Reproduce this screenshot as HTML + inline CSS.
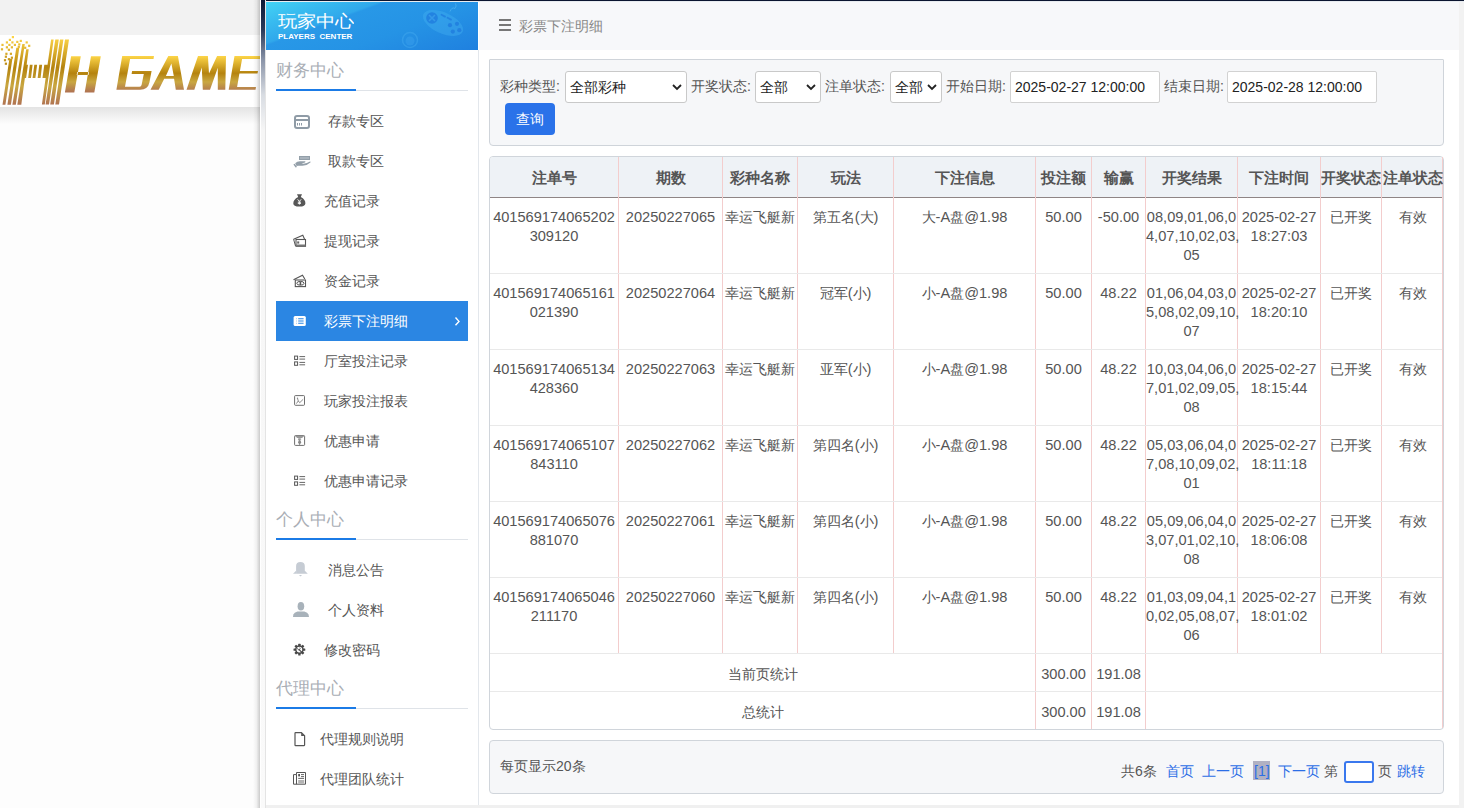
<!DOCTYPE html>
<html><head><meta charset="utf-8">
<style>
*{box-sizing:border-box;margin:0;padding:0}
html,body{width:1464px;height:808px;overflow:hidden;background:#fdfdfd;font-family:"Liberation Sans",sans-serif;font-size:14px;color:#555}
.abs{position:absolute}
/* left background */
#lb-top{left:0;top:0;width:260px;height:35px;background:#f2f2f2}
#lb-band{left:0;top:35px;width:260px;height:72px;background:#fff}
#lb-shadow{left:0;top:107px;width:260px;height:17px;background:linear-gradient(#e3e3e3,#fdfdfd)}
#lb-rshadow{left:253px;top:0;width:7px;height:808px;background:linear-gradient(90deg,rgba(0,0,0,0),rgba(0,0,0,.05) 50%,rgba(0,0,0,.2))}
#lb-white{left:260px;top:0;width:1px;height:808px;background:#fff}
/* panel */
#panel{left:261px;top:0;width:1203px;height:808px;background:#fff}
#topline{left:261px;top:0;width:1203px;height:2px;background:linear-gradient(#0b1530 0,#0b1530 50%,#e8ecf0 50%)}
#lbar{left:261px;top:0;width:4px;height:808px;background:linear-gradient(#0a1836 0,#2a3a5a 30px,#8a94a8 60px,#d8dce2 95px,#f6f6f6 130px,#fafafa 100%)}
#lbar2{left:265px;top:0;width:1px;height:808px;background:#e4e4e4}
#side{left:266px;top:2px;width:212px;height:803px;background:#fff}
#head{left:266px;top:2px;width:212px;height:48px;background:linear-gradient(160deg,#43d3f5 0%,#39bdf0 16%,#30a8eb 33%,#2898e7 35%,#2593e5 62%,#1f80df 100%);overflow:hidden}
#divider{left:478px;top:50px;width:1px;height:755px;background:#e3e7ec}
#crumb{left:479px;top:2px;width:980px;height:48px;background:#f7f8fa}
#rband{left:1459px;top:2px;width:5px;height:806px;background:#f2f2f2}
#bband{left:261px;top:805px;width:1198px;height:3px;background:#f0f0f0}

.sec{position:absolute;left:276px;font-size:17px;color:#a9aeb5;line-height:20px}
.secline{position:absolute;left:276px;width:192px;height:1px;background:#dfe3e8}
.secblue{position:absolute;left:276px;width:80px;height:2px;background:#1b7be6}
.mi{position:absolute;font-size:14px;color:#555;line-height:16px;white-space:nowrap}
.ic{position:absolute}
#active{left:276px;top:301px;width:192px;height:40px;background:#2b86e3}

/* filter */
#filter{left:489px;top:59px;width:955px;height:87px;background:#f6f7f9;border:1px solid #cfd4da;border-radius:1px 1px 4px 4px}
.lbl{position:absolute;top:78px;font-size:14px;color:#555;line-height:16px;white-space:nowrap}
.sel{position:absolute;top:71px;height:32px;background:#fff;border:1px solid #c9c9c9;border-radius:3px;font-size:14px;color:#222;line-height:16px;padding:7px 0 0 4px;white-space:nowrap}
.sel svg{position:absolute;top:12px}
.inp{position:absolute;top:71px;height:32px;width:150px;background:#fff;border:1px solid #d2d2d2;border-radius:2px;font-size:14px;color:#222;padding:7px 0 0 4px;line-height:16px;white-space:nowrap}
#btn{left:505px;top:103px;width:50px;height:32px;background:#2a72e9;border-radius:4px;color:#fff;font-size:14px;line-height:16px;padding:8px 0 0 0;text-align:center}

/* table */
#tbl{left:489px;top:156px;width:955px;height:574px;border:1px solid #d0d5db;border-radius:4px;background:#fff}
.vl{width:1px;background:#f3cdcd}
.hl{left:490px;width:952px;height:1px;background:#e9e9e9}
.th{position:absolute;top:170px;font-size:15px;font-weight:bold;color:#555;text-align:center;line-height:16px;white-space:nowrap;overflow:hidden}
.td{position:absolute;font-size:14px;color:#555;text-align:center;line-height:19px;white-space:nowrap}
.n{font-size:14.6px}
/* pager */
#pager{left:489px;top:740px;width:955px;height:54px;background:#f6f7f9;border:1px solid #d0d5db;border-radius:4px}
.pg{position:absolute;top:763px;font-size:14px;line-height:16px;white-space:nowrap;color:#555}
.pb{color:#2c6ee6}
</style></head><body>
<div class="abs" id="lb-top"></div>
<div class="abs" id="lb-band"></div>
<div class="abs" id="lb-shadow"></div>
<svg class="abs" style="left:0;top:0" width="260" height="110" viewBox="0 0 260 110">
<defs>
<linearGradient id="gl" gradientUnits="userSpaceOnUse" x1="0" y1="56" x2="0" y2="92"><stop offset="0" stop-color="#fdd547"/><stop offset=".48" stop-color="#b5830e"/><stop offset=".72" stop-color="#c9a741"/><stop offset="1" stop-color="#b07352"/></linearGradient>
<linearGradient id="gs" gradientUnits="userSpaceOnUse" x1="0" y1="37" x2="0" y2="105"><stop offset="0" stop-color="#fdd547"/><stop offset=".45" stop-color="#b5830e"/><stop offset=".72" stop-color="#c9a741"/><stop offset="1" stop-color="#b07352"/></linearGradient>
</defs>
<g fill="url(#gs)"><path d="M51.1,39.6L53.6,39.6L44.8,104.6L41.9,104.6ZM55.3,39.6L58.8,39.6L49,104.6L45.6,104.6ZM60,39.6L63.4,39.6L53.9,104.6L50.2,104.6ZM65,39.6L69,39.6L59,104.6L55.3,104.6ZM9.4,58.7L12.4,58.7L5.4,104.7L2.5,104.7ZM16.3,47.8L19.3,47.8L10.9,104.7L7.4,104.7ZM22.3,43.9L24.8,43.9L15.8,104.7L12.4,104.7ZM26.2,49.3L28.7,49.3L21.3,104.7L17.3,104.7ZM24.0,64.65L28,64.65L26.1,78L21.8,78ZM29.85,64.65L32.6,64.65L31,78L28.2,78ZM34.3,64.65L37.1,64.65L35.4,78L32.6,78ZM39.3,64.65L42.1,64.65L40.6,78L37.65,78ZM44.3,64.65L48.6,64.65L47,78L42.5,78Z"/><rect x="11.8" y="36.0" width="2.2" height="2.2"/><rect x="8.8" y="38.8" width="2.2" height="2.2"/><rect x="5.8" y="41.3" width="2.2" height="2.2"/><rect x="11.3" y="41.3" width="2.2" height="2.2"/><rect x="16.2" y="40.8" width="2.2" height="2.2"/><rect x="19.7" y="39.8" width="2.2" height="2.2"/><rect x="25.6" y="41.3" width="2.2" height="2.2"/><rect x="1.4" y="43.8" width="2.2" height="2.2"/><rect x="8.3" y="43.8" width="2.2" height="2.2"/><rect x="13.8" y="43.8" width="2.2" height="2.2"/><rect x="18.2" y="43.3" width="2.2" height="2.2"/><rect x="28.1" y="44.7" width="2.2" height="2.2"/><rect x="5.8" y="46.2" width="2.2" height="2.2"/><rect x="10.8" y="46.2" width="2.2" height="2.2"/><rect x="17.7" y="45.7" width="2.2" height="2.2"/><rect x="24.1" y="46.7" width="2.2" height="2.2"/><rect x="0.9" y="48.2" width="2.2" height="2.2"/><rect x="7.8" y="48.7" width="2.2" height="2.2"/><rect x="5.3" y="52.7" width="2.2" height="2.2"/><rect x="9.8" y="52.7" width="2.2" height="2.2"/><rect x="4.8" y="55.6" width="2.2" height="2.2"/><rect x="10.8" y="56.6" width="2.2" height="2.2"/><rect x="7.8" y="58.1" width="2.2" height="2.2"/><rect x="3.9" y="59.1" width="2.2" height="2.2"/><rect x="4.8" y="62.6" width="2.2" height="2.2"/></g>
<path fill="url(#gl)" fill-rule="evenodd" d="M71.1,56.2L80.8,56.2L74.3,92.5L64.9,92.5ZM91,56.2L100.8,56.2L94.3,92.5L84.7,92.5ZM77.2,72.1L89,72.1L88.5,74.9L76.7,74.9ZM122.2,55.9L154,55.9L153.5,59L130.1,59L125,86.8L139.5,86.8Q141.3,86.8 141.7,84.6L143.8,74L131.6,74L132.1,71L151.6,71L149.4,82.6Q148,89.7 140,89.7L116.4,89.7ZM150.5,89.7L168.3,55.9L177.9,55.9L184,89.7L175.8,89.7L174.1,78.8L164.2,78.8L158.7,89.7ZM165.9,76.1L173.8,76.1L171.4,63.4ZM186.5,89.7L198,55.9L207.9,55.9L209,73.5L217.1,55.9L226,55.9L225.3,89.7L217.8,89.7L217.8,67.8L210,89.7L202.8,89.7L201.8,67.5L194.3,89.7ZM234.5,55.9L262,55.9L261.5,59L242.1,59L239.9,71L258,71L257.5,73.6L239.4,73.6L237.1,86.9L256,86.9L255.5,89.7L228.7,89.7Z"/>
</svg>
<div class="abs" id="lb-rshadow"></div>
<div class="abs" id="lb-white"></div>

<div class="abs" id="panel"></div>
<div class="abs" id="side"></div>
<div class="abs" id="head">
<svg class="abs" style="left:0;top:0" width="212" height="48" viewBox="0 0 212 48">
<g transform="rotate(24 177 21)"><ellipse cx="177" cy="21" rx="21.5" ry="10.5" fill="#48b4f3" opacity=".38"/></g>
<circle cx="166" cy="16" r="5.8" fill="#1d7ade" opacity=".75"/>
<path d="M163 13l6 6M169 13l-6 6" stroke="#3a9fec" stroke-width="1.6" opacity=".8"/>
<path d="M175.5 12.8l3.5 1.8M181.5 15.8l3.5 1.8" stroke="#1d7ade" stroke-width="1.8" stroke-linecap="round" opacity=".7"/>
<circle cx="184" cy="23.2" r="2.1" fill="#1d7ade" opacity=".75"/><circle cx="191" cy="21.8" r="2.1" fill="#1d7ade" opacity=".75"/>
<circle cx="186.8" cy="29.6" r="2.1" fill="#1d7ade" opacity=".75"/><circle cx="193.3" cy="28.2" r="2.1" fill="#1d7ade" opacity=".75"/>
<path d="M184 9.5 Q186 4.5 189 6.5 Q191 4 189.5 1.5" fill="none" stroke="#55b8f2" stroke-width="1" opacity=".6"/>
<circle cx="144" cy="38" r="7.5" fill="none" stroke="#45aaf0" stroke-width="1.5" opacity=".45"/>
<circle cx="144" cy="39" r="4.5" fill="#45aaf0" opacity=".35"/>
</svg>
<div class="abs" style="left:12px;top:9px;font-size:19px;line-height:22px;color:#fff;white-space:nowrap;transform:scaleY(.88);transform-origin:0 50%">玩家中心</div>
<div class="abs" style="left:12px;top:30px;font-size:8px;line-height:10px;font-weight:bold;color:#fff;white-space:nowrap">PLAYERS</div>
<div class="abs" style="left:53.5px;top:30px;font-size:8px;line-height:10px;font-weight:bold;color:#fff;white-space:nowrap">CENTER</div>
</div>
<div class="abs" id="crumb"></div>
<div class="abs" id="divider"></div>
<div class="abs" id="rband"></div>
<div class="abs" id="bband"></div>
<div class="abs" id="topline"></div>
<div class="abs" id="lbar"></div>
<div class="abs" id="lbar2"></div>

<!-- sidebar -->
<div class="sec" style="top:61px">财务中心</div>
<div class="secline" style="top:90px"></div>
<div class="secblue" style="top:89px"></div>
<div id="active" class="abs"></div>
<div class="mi" style="left:328px;top:113px">存款专区</div>
<div class="mi" style="left:328px;top:153px">取款专区</div>
<div class="mi" style="left:324px;top:193px">充值记录</div>
<div class="mi" style="left:324px;top:233px">提现记录</div>
<div class="mi" style="left:324px;top:273px">资金记录</div>
<div class="mi" style="left:324px;top:313px;color:#fff">彩票下注明细</div>
<div class="mi" style="left:324px;top:353px">厅室投注记录</div>
<div class="mi" style="left:324px;top:393px">玩家投注报表</div>
<div class="mi" style="left:324px;top:433px">优惠申请</div>
<div class="mi" style="left:324px;top:473px">优惠申请记录</div>

<div class="sec" style="top:510px">个人中心</div>
<div class="secline" style="top:539px"></div>
<div class="secblue" style="top:538px"></div>
<div class="mi" style="left:328px;top:562px">消息公告</div>
<div class="mi" style="left:328px;top:602px">个人资料</div>
<div class="mi" style="left:324px;top:642px">修改密码</div>

<div class="sec" style="top:679px">代理中心</div>
<div class="secline" style="top:708px"></div>
<div class="secblue" style="top:707px"></div>
<div class="mi" style="left:320px;top:731px">代理规则说明</div>
<div class="mi" style="left:320px;top:771px">代理团队统计</div>

<svg class="abs" style="left:286px;top:100px" width="180" height="700" viewBox="286 100 180 700">
<!-- card -->
<rect x="295" y="116" width="14" height="12" rx="2" fill="none" stroke="#8f9ba6" stroke-width="2"/>
<rect x="295" y="119" width="14" height="2" fill="#8f9ba6"/>
<path d="M297.5 123v2.5M299.5 123v2.5M301.5 123v2.5" stroke="#8f9ba6" stroke-width="1"/>
<!-- hand -->
<rect x="299" y="156" width="11" height="4" fill="#a9b3bc"/>
<rect x="299.5" y="156.5" width="10" height="3" fill="none" stroke="#939fa9" stroke-width="1"/>
<path d="M295.2 163.2Q297 161.3 300 161.3L305 161.3Q306 161.6 305 162.6L301.5 163.4L303.5 163.7Q307 163.4 310 161.4Q311 161.4 310.4 162.4Q307 165.6 302.5 165.8L298.2 165.8L296.6 166Z" fill="#939fa9"/>
<path d="M293.4 164.4L294.8 163.8L297 167L295.6 167.6Z" fill="#939fa9"/>
<!-- money bag -->
<path d="M297 194.3L302 194.3L300.8 197Q305.6 199.5 305.4 203.5Q305.3 206.6 299.5 206.6Q293.2 206.6 293.3 203.5Q293.2 199.5 298.2 197Z" fill="#575757"/>
<path d="M297.6 199.3L299.4 201.4L301.2 199.3M299.4 201.4V204.6M297.8 202.2H301M297.8 203.4H301" fill="none" stroke="#fff" stroke-width=".9"/>
<!-- wallet -->
<path d="M293.6 239.2L302.8 235.3L304.6 239.2" fill="none" stroke="#555" stroke-width="1.1"/>
<path d="M293.6 239.2L295.5 246" fill="none" stroke="#555" stroke-width="1"/>
<rect x="296" y="239.5" width="9.5" height="6.8" fill="none" stroke="#555" stroke-width="1.1"/>
<rect x="297.2" y="241.4" width="2" height="2.2" fill="#666"/>
<rect x="296" y="244.5" width="9.5" height="1.8" fill="#777"/>
<!-- cash -->
<path d="M293.5 279.7L302.5 275.2L304.8 279" fill="none" stroke="#555" stroke-width="1.1"/>
<rect x="295.3" y="280" width="10.2" height="6.6" fill="none" stroke="#555" stroke-width="1.1"/>
<ellipse cx="300.4" cy="283.3" rx="3.6" ry="1.9" fill="none" stroke="#555" stroke-width="1"/>
<rect x="299.6" y="281.6" width="1.6" height="3.4" fill="#555"/>
<!-- active list (white) -->
<rect x="293.6" y="316" width="12.2" height="10" rx="1.5" fill="#fff"/>
<path d="M298.2 318.7H303.6M298.2 321H303.6M298.2 323.3H303.6" stroke="#2b86e3" stroke-width="1.1"/>
<path d="M296.2 318.7H296.9M296.2 321H296.9M296.2 323.3H296.9" stroke="#2b86e3" stroke-width="1" opacity=".6"/>
<path d="M455.5 317.5L459 321.4L455.5 325.3" fill="none" stroke="#fff" stroke-width="1.4"/>
<!-- list 1 -->
<rect x="294.6" y="356.1" width="3" height="3.3" fill="none" stroke="#555" stroke-width="1"/>
<rect x="294.6" y="361.9" width="3" height="3.4" fill="none" stroke="#555" stroke-width="1"/>
<path d="M299.4 356.6H305.1M299.4 359.1H305.1M299.4 362.4H305.1M299.4 364.8H305.1" stroke="#666" stroke-width="1"/>
<!-- chart -->
<rect x="294.6" y="395.6" width="9.9" height="9.7" rx=".8" fill="none" stroke="#666" stroke-width=".95"/>
<path d="M296.4 403.6L298.3 400.9L299.7 402.7L303.2 399.3M297.5 398.4L298.3 400.9" fill="none" stroke="#777" stroke-width=".85"/>
<circle cx="297.5" cy="398.2" r=".7" fill="#888"/>
<!-- gift -->
<rect x="294.6" y="435.6" width="10" height="9.8" rx=".8" fill="none" stroke="#666" stroke-width=".95"/>
<path d="M294.6 435.8H304.6L302 438H297.2Z" fill="#999"/>
<path d="M299.6 438.6V445" stroke="#888" stroke-width=".9"/><rect x="298.4" y="438.8" width="2.4" height="1.2" fill="none" stroke="#888" stroke-width=".6"/>
<ellipse cx="299.6" cy="442.3" rx="1.5" ry="1.8" fill="#888"/>
<!-- list 2 -->
<rect x="294.6" y="476.1" width="3" height="3.3" fill="none" stroke="#555" stroke-width="1"/>
<rect x="294.6" y="481.9" width="3" height="3.4" fill="none" stroke="#555" stroke-width="1"/>
<path d="M299.4 476.6H305.1M299.4 479.1H305.1M299.4 482.4H305.1M299.4 484.8H305.1" stroke="#666" stroke-width="1"/>
<!-- bell -->
<path d="M296.1 573.8V566Q296.1 562.1 300.4 562.1Q304.8 562.1 304.8 566V570.8L307.8 573.8Z" fill="#c6ccd4"/>
<path d="M293 573.8L296.1 570.8L296.1 573.8Z" fill="#c6ccd4"/>
<path d="M299 575.1H302L300.5 576.6Z" fill="#c6ccd4"/>
<!-- person -->
<ellipse cx="300.9" cy="606.3" rx="3.3" ry="4.3" fill="#a8b2ba"/>
<path d="M293 617L293.4 614.6Q294 612.6 297.5 611.6L304.3 611.6Q307.8 612.6 308.5 614.6L309 617Z" fill="#a8b2ba"/>
<!-- gear -->
<g transform="translate(299.4 649.6)" fill="#484848">
<rect x="-1.2" y="-5.9" width="2.4" height="2.6" rx=".5"/>
<rect x="-1.2" y="-5.9" width="2.4" height="2.6" rx=".5" transform="rotate(45)"/>
<rect x="-1.2" y="-5.9" width="2.4" height="2.6" rx=".5" transform="rotate(90)"/>
<rect x="-1.2" y="-5.9" width="2.4" height="2.6" rx=".5" transform="rotate(135)"/>
<rect x="-1.2" y="-5.9" width="2.4" height="2.6" rx=".5" transform="rotate(180)"/>
<rect x="-1.2" y="-5.9" width="2.4" height="2.6" rx=".5" transform="rotate(225)"/>
<rect x="-1.2" y="-5.9" width="2.4" height="2.6" rx=".5" transform="rotate(270)"/>
<rect x="-1.2" y="-5.9" width="2.4" height="2.6" rx=".5" transform="rotate(315)"/>
<circle r="3.6" fill="none" stroke="#484848" stroke-width="1.4"/>
<path d="M-.6 -.2L2.6 2.8" stroke="#484848" stroke-width="1.2"/>
<path d="M-1.8 -1.4A1.3 1.3 0 1 0 .4 -2" fill="none" stroke="#484848" stroke-width=".9"/>
</g>
<!-- doc -->
<path d="M295.6 732.6H301.4L304.6 735.8V745.1Q304.6 745.6 304.1 745.6H295.6Q295 745.6 295 745V733.2Q295 732.6 295.6 732.6Z" fill="none" stroke="#555" stroke-width="1.2"/>
<path d="M301.2 732.6L304.6 736L301.2 736Z" fill="#555"/>
<!-- newspaper -->
<path d="M296.5 772.5H305.5V784.2H293.5V774.6H296.5Z" fill="none" stroke="#555" stroke-width="1"/>
<path d="M296.5 774.6V784.2" stroke="#555" stroke-width="1"/>
<rect x="298.2" y="774" width="1.8" height="2.4" fill="#555"/>
<path d="M301 774.6H304M301 776.6H304M298.2 778.4H304" stroke="#555" stroke-width=".9"/>
<rect x="298.2" y="780" width="6" height="3.6" fill="#b4b4b4"/>
</svg>

<!-- crumb -->
<div class="abs" style="left:499px;top:19px;width:12px;height:2px;background:#777"></div>
<div class="abs" style="left:499px;top:24px;width:12px;height:2px;background:#777"></div>
<div class="abs" style="left:499px;top:29px;width:12px;height:2px;background:#777"></div>
<div class="mi" style="left:519px;top:18px;color:#888">彩票下注明细</div>

<!-- filter -->
<div class="abs" id="filter"></div>
<div class="lbl" style="left:500px">彩种类型:</div>
<div class="sel" style="left:565px;width:122px">全部彩种<svg style="left:106px" width="10" height="7" viewBox="0 0 10 7"><path d="M1 1l4 4 4-4" fill="none" stroke="#222" stroke-width="1.8"/></svg></div>
<div class="lbl" style="left:691px">开奖状态:</div>
<div class="sel" style="left:755px;width:66px">全部<svg style="left:50px" width="10" height="7" viewBox="0 0 10 7"><path d="M1 1l4 4 4-4" fill="none" stroke="#222" stroke-width="1.8"/></svg></div>
<div class="lbl" style="left:825px">注单状态:</div>
<div class="sel" style="left:890px;width:52px">全部<svg style="left:36px" width="10" height="7" viewBox="0 0 10 7"><path d="M1 1l4 4 4-4" fill="none" stroke="#222" stroke-width="1.8"/></svg></div>
<div class="lbl" style="left:946px">开始日期:</div>
<div class="inp" style="left:1010px">2025-02-27 12:00:00</div>
<div class="lbl" style="left:1164px">结束日期:</div>
<div class="inp" style="left:1227px">2025-02-28 12:00:00</div>
<div class="abs" id="btn">查询</div>

<!-- table -->
<div class="abs" id="tbl"></div>
<div class="abs" style="left:490px;top:157px;width:952px;height:40px;background:#eef2f6;border-radius:3px 3px 0 0"></div>
<div class="abs" style="left:490px;top:197px;width:952px;height:1px;background:#8f8585"></div>
<div class="abs vl" style="left:618px;top:157px;height:496px"></div>
<div class="abs vl" style="left:722px;top:157px;height:496px"></div>
<div class="abs vl" style="left:797px;top:157px;height:496px"></div>
<div class="abs vl" style="left:893px;top:157px;height:496px"></div>
<div class="abs vl" style="left:1035px;top:157px;height:496px"></div>
<div class="abs vl" style="left:1091px;top:157px;height:496px"></div>
<div class="abs vl" style="left:1145px;top:157px;height:496px"></div>
<div class="abs vl" style="left:1237px;top:157px;height:496px"></div>
<div class="abs vl" style="left:1320px;top:157px;height:496px"></div>
<div class="abs vl" style="left:1381px;top:157px;height:496px"></div>
<div class="abs vl" style="left:1442px;top:157px;height:571px"></div>
<div class="abs vl" style="left:1035px;top:653px;height:76px"></div>
<div class="abs vl" style="left:1091px;top:653px;height:76px"></div>
<div class="abs vl" style="left:1145px;top:653px;height:76px"></div>
<div class="abs hl" style="top:273px"></div>
<div class="abs hl" style="top:349px"></div>
<div class="abs hl" style="top:425px"></div>
<div class="abs hl" style="top:501px"></div>
<div class="abs hl" style="top:577px"></div>
<div class="abs hl" style="top:653px"></div>
<div class="abs hl" style="top:691px"></div>
<div class="th" style="left:490px;width:128px">注单号</div>
<div class="th" style="left:619px;width:103px">期数</div>
<div class="th" style="left:723px;width:74px">彩种名称</div>
<div class="th" style="left:798px;width:95px">玩法</div>
<div class="th" style="left:894px;width:141px">下注信息</div>
<div class="th" style="left:1036px;width:55px">投注额</div>
<div class="th" style="left:1092px;width:53px">输赢</div>
<div class="th" style="left:1146px;width:91px">开奖结果</div>
<div class="th" style="left:1238px;width:82px">下注时间</div>
<div class="th" style="left:1321px;width:60px">开奖状态</div>
<div class="th" style="left:1382px;width:61px">注单状态</div>
<div class="td" style="left:490px;width:128px;top:208px"><span class="n">401569174065202</span><br><span class="n">309120</span></div>
<div class="td" style="left:619px;width:103px;top:208px"><span class="n">20250227065</span></div>
<div class="td" style="left:723px;width:74px;top:208px">幸运飞艇新</div>
<div class="td" style="left:798px;width:95px;top:208px">第五名<span class="n">(</span>大<span class="n">)</span></div>
<div class="td" style="left:894px;width:141px;top:208px">大<span class="n">-A</span>盘<span class="n">@1.98</span></div>
<div class="td" style="left:1036px;width:55px;top:208px"><span class="n">50.00</span></div>
<div class="td" style="left:1092px;width:53px;top:208px"><span class="n">-50.00</span></div>
<div class="td" style="left:1146px;width:91px;top:208px"><span class="n">08,09,01,06,0</span><br><span class="n">4,07,10,02,03,</span><br><span class="n">05</span></div>
<div class="td" style="left:1238px;width:82px;top:208px"><span class="n">2025-02-27</span><br><span class="n">18:27:03</span></div>
<div class="td" style="left:1321px;width:60px;top:208px">已开奖</div>
<div class="td" style="left:1382px;width:61px;top:208px">有效</div>
<div class="td" style="left:490px;width:128px;top:284px"><span class="n">401569174065161</span><br><span class="n">021390</span></div>
<div class="td" style="left:619px;width:103px;top:284px"><span class="n">20250227064</span></div>
<div class="td" style="left:723px;width:74px;top:284px">幸运飞艇新</div>
<div class="td" style="left:798px;width:95px;top:284px">冠军<span class="n">(</span>小<span class="n">)</span></div>
<div class="td" style="left:894px;width:141px;top:284px">小<span class="n">-A</span>盘<span class="n">@1.98</span></div>
<div class="td" style="left:1036px;width:55px;top:284px"><span class="n">50.00</span></div>
<div class="td" style="left:1092px;width:53px;top:284px"><span class="n">48.22</span></div>
<div class="td" style="left:1146px;width:91px;top:284px"><span class="n">01,06,04,03,0</span><br><span class="n">5,08,02,09,10,</span><br><span class="n">07</span></div>
<div class="td" style="left:1238px;width:82px;top:284px"><span class="n">2025-02-27</span><br><span class="n">18:20:10</span></div>
<div class="td" style="left:1321px;width:60px;top:284px">已开奖</div>
<div class="td" style="left:1382px;width:61px;top:284px">有效</div>
<div class="td" style="left:490px;width:128px;top:360px"><span class="n">401569174065134</span><br><span class="n">428360</span></div>
<div class="td" style="left:619px;width:103px;top:360px"><span class="n">20250227063</span></div>
<div class="td" style="left:723px;width:74px;top:360px">幸运飞艇新</div>
<div class="td" style="left:798px;width:95px;top:360px">亚军<span class="n">(</span>小<span class="n">)</span></div>
<div class="td" style="left:894px;width:141px;top:360px">小<span class="n">-A</span>盘<span class="n">@1.98</span></div>
<div class="td" style="left:1036px;width:55px;top:360px"><span class="n">50.00</span></div>
<div class="td" style="left:1092px;width:53px;top:360px"><span class="n">48.22</span></div>
<div class="td" style="left:1146px;width:91px;top:360px"><span class="n">10,03,04,06,0</span><br><span class="n">7,01,02,09,05,</span><br><span class="n">08</span></div>
<div class="td" style="left:1238px;width:82px;top:360px"><span class="n">2025-02-27</span><br><span class="n">18:15:44</span></div>
<div class="td" style="left:1321px;width:60px;top:360px">已开奖</div>
<div class="td" style="left:1382px;width:61px;top:360px">有效</div>
<div class="td" style="left:490px;width:128px;top:436px"><span class="n">401569174065107</span><br><span class="n">843110</span></div>
<div class="td" style="left:619px;width:103px;top:436px"><span class="n">20250227062</span></div>
<div class="td" style="left:723px;width:74px;top:436px">幸运飞艇新</div>
<div class="td" style="left:798px;width:95px;top:436px">第四名<span class="n">(</span>小<span class="n">)</span></div>
<div class="td" style="left:894px;width:141px;top:436px">小<span class="n">-A</span>盘<span class="n">@1.98</span></div>
<div class="td" style="left:1036px;width:55px;top:436px"><span class="n">50.00</span></div>
<div class="td" style="left:1092px;width:53px;top:436px"><span class="n">48.22</span></div>
<div class="td" style="left:1146px;width:91px;top:436px"><span class="n">05,03,06,04,0</span><br><span class="n">7,08,10,09,02,</span><br><span class="n">01</span></div>
<div class="td" style="left:1238px;width:82px;top:436px"><span class="n">2025-02-27</span><br><span class="n">18:11:18</span></div>
<div class="td" style="left:1321px;width:60px;top:436px">已开奖</div>
<div class="td" style="left:1382px;width:61px;top:436px">有效</div>
<div class="td" style="left:490px;width:128px;top:512px"><span class="n">401569174065076</span><br><span class="n">881070</span></div>
<div class="td" style="left:619px;width:103px;top:512px"><span class="n">20250227061</span></div>
<div class="td" style="left:723px;width:74px;top:512px">幸运飞艇新</div>
<div class="td" style="left:798px;width:95px;top:512px">第四名<span class="n">(</span>小<span class="n">)</span></div>
<div class="td" style="left:894px;width:141px;top:512px">小<span class="n">-A</span>盘<span class="n">@1.98</span></div>
<div class="td" style="left:1036px;width:55px;top:512px"><span class="n">50.00</span></div>
<div class="td" style="left:1092px;width:53px;top:512px"><span class="n">48.22</span></div>
<div class="td" style="left:1146px;width:91px;top:512px"><span class="n">05,09,06,04,0</span><br><span class="n">3,07,01,02,10,</span><br><span class="n">08</span></div>
<div class="td" style="left:1238px;width:82px;top:512px"><span class="n">2025-02-27</span><br><span class="n">18:06:08</span></div>
<div class="td" style="left:1321px;width:60px;top:512px">已开奖</div>
<div class="td" style="left:1382px;width:61px;top:512px">有效</div>
<div class="td" style="left:490px;width:128px;top:588px"><span class="n">401569174065046</span><br><span class="n">211170</span></div>
<div class="td" style="left:619px;width:103px;top:588px"><span class="n">20250227060</span></div>
<div class="td" style="left:723px;width:74px;top:588px">幸运飞艇新</div>
<div class="td" style="left:798px;width:95px;top:588px">第四名<span class="n">(</span>小<span class="n">)</span></div>
<div class="td" style="left:894px;width:141px;top:588px">小<span class="n">-A</span>盘<span class="n">@1.98</span></div>
<div class="td" style="left:1036px;width:55px;top:588px"><span class="n">50.00</span></div>
<div class="td" style="left:1092px;width:53px;top:588px"><span class="n">48.22</span></div>
<div class="td" style="left:1146px;width:91px;top:588px"><span class="n">01,03,09,04,1</span><br><span class="n">0,02,05,08,07,</span><br><span class="n">06</span></div>
<div class="td" style="left:1238px;width:82px;top:588px"><span class="n">2025-02-27</span><br><span class="n">18:01:02</span></div>
<div class="td" style="left:1321px;width:60px;top:588px">已开奖</div>
<div class="td" style="left:1382px;width:61px;top:588px">有效</div>
<div class="td" style="left:490px;width:545px;top:665px">当前页统计</div>
<div class="td" style="left:1036px;width:55px;top:665px"><span class="n">300.00</span></div>
<div class="td" style="left:1092px;width:53px;top:665px"><span class="n">191.08</span></div>
<div class="td" style="left:490px;width:545px;top:703px">总统计</div>
<div class="td" style="left:1036px;width:55px;top:703px"><span class="n">300.00</span></div>
<div class="td" style="left:1092px;width:53px;top:703px"><span class="n">191.08</span></div>
<!-- pager -->
<div class="abs" id="pager"></div>
<div class="pg" style="left:500px;top:758px">每页显示20条</div>
<div class="pg" style="left:1121px">共6条</div>
<div class="pg pb" style="left:1166px">首页</div>
<div class="pg pb" style="left:1202px">上一页</div>
<div class="abs" style="left:1253px;top:761px;width:17px;height:19px;background:#b1b1c2"></div>
<div class="pg pb" style="left:1254px">[1]</div>
<div class="pg pb" style="left:1278px">下一页</div>
<div class="pg" style="left:1324px">第</div>
<div class="abs" style="left:1344px;top:761px;width:30px;height:22px;border:2px solid #3a78ee;border-radius:3px;background:#fff"></div>
<div class="pg" style="left:1378px">页</div>
<div class="pg pb" style="left:1397px">跳转</div>

</body></html>
